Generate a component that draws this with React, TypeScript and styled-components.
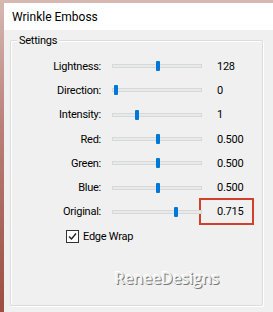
import React from "react";
import styled, { createGlobalStyle } from "styled-components";

const Global = createGlobalStyle`
  html, body { margin: 0; padding: 0; }
  body {
    width: 273px;
    height: 312px;
    overflow: hidden;
    background: linear-gradient(180deg, #d8b8b4 0%, #b98078 40%, #9c4e40 100%);
    font-family: Roboto, "Noto Sans", "Liberation Sans", sans-serif;
  }
`;

const Frame = styled.div`
  padding: 3px 0 0 4px;
  height: 312px;
  box-sizing: border-box;
`;

const Window = styled.div`
  width: 269px;
  height: 309px;
  background: #f0f0f0;
  display: flex;
  flex-direction: column;
`;

const TitleBar = styled.div`
  height: 27px;
  background: #ffffff;
  display: flex;
  align-items: center;
  padding-left: 8px;
  font-size: 12px;
  color: #000;
`;

const Body = styled.div`
  flex: 1;
  padding: 10px 10px 6px 6px;
  display: flex;
`;

const Group = styled.div`
  position: relative;
  flex: 1;
  border: 1px solid #dcdcdc;
  box-shadow: inset 1px 1px 0 #ffffff, 1px 1px 0 #ffffff;
  border-radius: 2px;
  padding-top: 13px;
  display: flex;
  flex-direction: column;
`;

const Legend = styled.span`
  position: absolute;
  top: -8px;
  left: 6px;
  padding: 0 2px;
  background: #f0f0f0;
  font-size: 11px;
  letter-spacing: -0.25px;
  line-height: 15px;
  color: #000;
`;

const Rows = styled.div`
  display: grid;
  grid-template-columns: 90px 116px 1fr;
  grid-auto-rows: 24.3px;
  align-items: center;
  font-size: 11px;
  letter-spacing: -0.25px;
  color: #000;
`;

const Label = styled.span`
  text-align: right;
`;

const Track = styled.div`
  position: relative;
  margin-left: 11px;
  width: 90px;
  height: 4px;
  background: #e7eaea;
  border: 1px solid #d8d8d8;
  box-sizing: border-box;
`;

const Thumb = styled.div`
  position: absolute;
  top: -4px;
  width: 4px;
  height: 10px;
  margin-left: -2px;
  background: #0078d7;
  border-radius: 1px;
`;

const Value = styled.span<{ $boxed?: boolean }>`
  justify-self: start;
  margin-left: ${(p) => (p.$boxed ? "-18px" : "0")};
  ${(p) =>
    p.$boxed
      ? `
    border: 2px solid #d0402c;
    padding: 4px 9px 4px 16px;
    line-height: 15px;
  `
      : ""}
`;

const CheckRow = styled.label`
  grid-column: 1 / -1;
  display: flex;
  align-items: center;
  gap: 4px;
  padding-left: 55px;
`;

const Box = styled.span`
  width: 11px;
  height: 11px;
  border: 1px solid #333333;
  background: #ffffff;
  display: flex;
  align-items: center;
  justify-content: center;
`;

const Watermark = styled.div`
  margin-top: auto;
  margin-bottom: 16px;
  align-self: flex-end;
  margin-right: 43px;
  font-family: "Open Sans", "Noto Sans", sans-serif;
  font-weight: 600;
  font-size: 16px;
  letter-spacing: -0.3px;
  color: #f2f2f2;
  text-shadow: 1px 1px 0 #7a7a7a, -1px -1px 0 #ffffff, 0 0 1px #9a9a9a;
`;

type Row = { label: string; pos: number; value: string; boxed?: boolean };

const rows: Row[] = [
  { label: "Lightness:", pos: 45, value: "128" },
  { label: "Direction:", pos: 3, value: "0" },
  { label: "Intensity:", pos: 24, value: "1" },
  { label: "Red:", pos: 45, value: "0.500" },
  { label: "Green:", pos: 45, value: "0.500" },
  { label: "Blue:", pos: 45, value: "0.500" },
  { label: "Original:", pos: 63, value: "0.715", boxed: true },
];

export default function App() {
  return (
    <>
      <Global />
      <Frame>
        <Window>
          <TitleBar>Wrinkle Emboss</TitleBar>
          <Body>
            <Group>
              <Legend>Settings</Legend>
              <Rows>
                {rows.map((r) => (
                  <React.Fragment key={r.label}>
                    <Label>{r.label}</Label>
                    <Track>
                      <Thumb style={{ left: `${r.pos}px` }} />
                    </Track>
                    <Value $boxed={r.boxed}>{r.value}</Value>
                  </React.Fragment>
                ))}
                <CheckRow>
                  <Box>
                    <svg width="9" height="9" viewBox="0 0 9 9">
                      <path d="M1 4.5 L3.5 7 L8 1.5" fill="none" stroke="#222" strokeWidth="1.4" />
                    </svg>
                  </Box>
                  Edge Wrap
                </CheckRow>
              </Rows>
              <Watermark>ReneeDesigns</Watermark>
            </Group>
          </Body>
        </Window>
      </Frame>
    </>
  );
}
